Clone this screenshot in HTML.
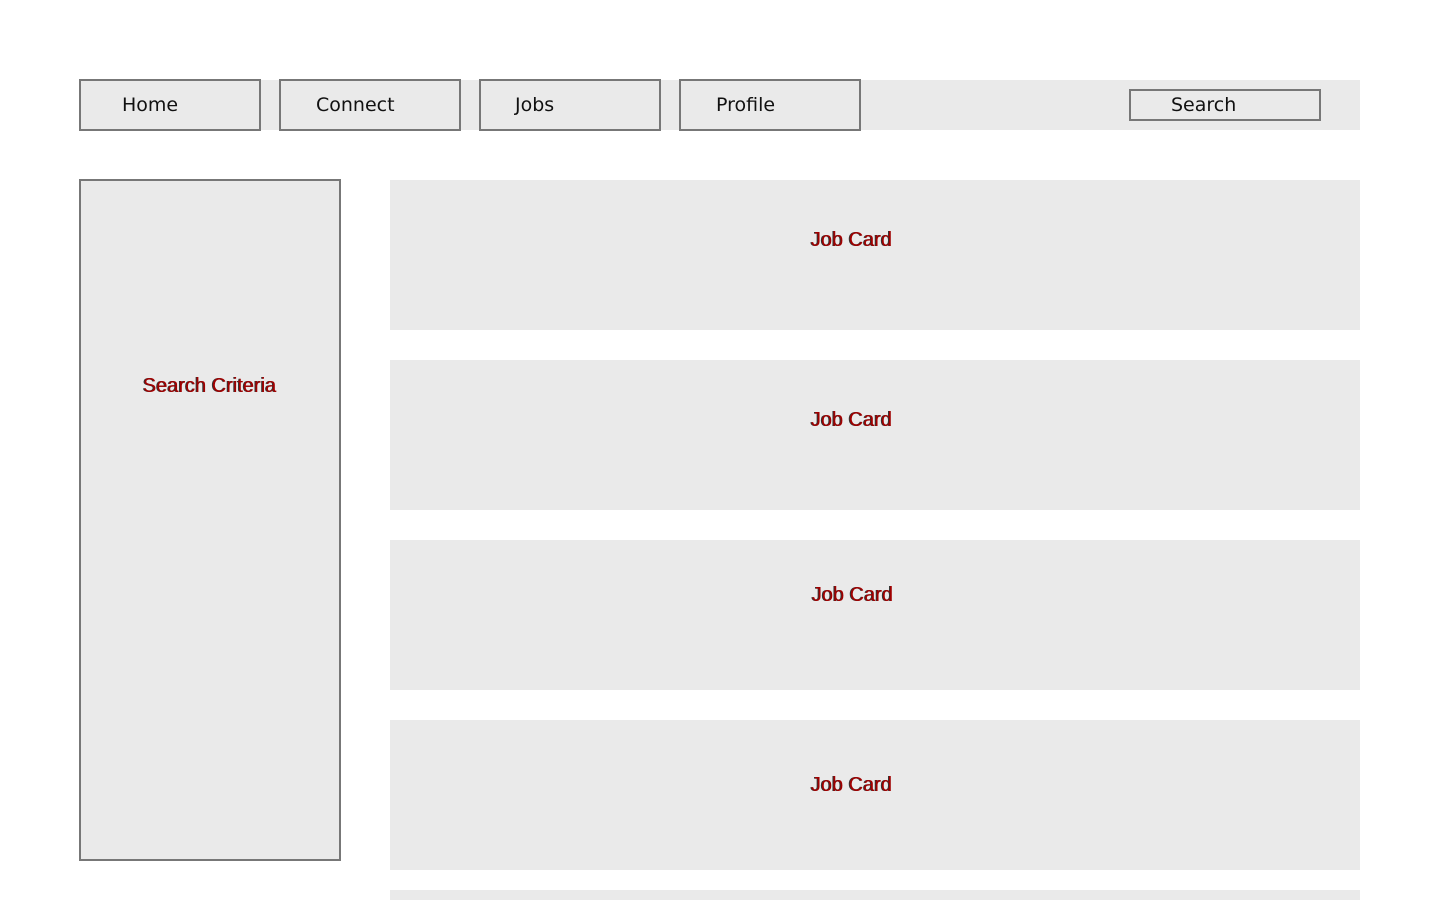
<!DOCTYPE html>
<html><head><style>
body{margin:0;width:1440px;height:900px;overflow:hidden;background:#fff;font-family:"DejaVu Sans","Liberation Sans",sans-serif;position:relative}
.a{position:absolute;box-sizing:border-box}
.nav{left:80px;top:80px;width:1280px;height:50px;background:#eaeaea}
.btn{top:79px;width:182px;height:52px;border:2px solid #777;background:#eaeaea;font-size:19px;line-height:48px;color:#111}
.card{left:390px;width:970px;height:150px;background:#eaeaea}
.lbl{position:absolute;font-family:"Liberation Sans",sans-serif;font-size:20px;color:#a00000;text-shadow:-1px 0 0 #333;white-space:nowrap}
</style></head><body>
<div class="a nav"></div>
<div class="a btn" style="left:79px"><span style="margin-left:41px">Home</span></div>
<div class="a btn" style="left:279px"><span style="margin-left:35px">Connect</span></div>
<div class="a btn" style="left:479px"><span style="margin-left:34px">Jobs</span></div>
<div class="a btn" style="left:679px"><span style="margin-left:35px">Profile</span></div>
<div class="a" style="left:1129px;top:89px;width:192px;height:32px;border:2px solid #777;font-size:19px;line-height:28px;color:#111"><span style="margin-left:40px">Search</span></div>
<div class="a" style="left:79px;top:179px;width:262px;height:682px;border:2px solid #777;background:#eaeaea"><span class="lbl" style="left:62px;top:194px">Search Criteria</span></div>
<div class="a card" style="top:180px"><span class="lbl" style="left:421px;top:49px">Job Card</span></div>
<div class="a card" style="top:360px"><span class="lbl" style="left:421px;top:49px">Job Card</span></div>
<div class="a card" style="top:540px"><span class="lbl" style="left:422px;top:44px">Job Card</span></div>
<div class="a card" style="top:720px"><span class="lbl" style="left:421px;top:54px">Job Card</span></div>
<div class="a card" style="top:890px;height:10px"></div>
</body></html>
